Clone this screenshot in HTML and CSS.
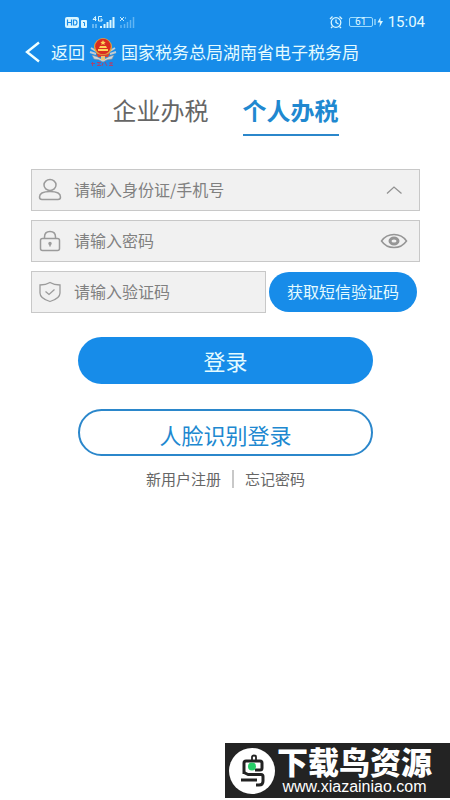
FILE: index.html
```html
<!DOCTYPE html>
<html lang="zh-CN">
<head>
<meta charset="utf-8">
<meta name="viewport" content="width=device-width, initial-scale=1">
<title>国家税务总局湖南省电子税务局</title>
<link rel="stylesheet" href="styles.css">
</head>
<body>
<header class="header">
  <div class="status">
    <div class="status-group">
      <svg width="72" height="14" viewBox="0 0 72 14" aria-hidden="true">
        <rect x="0" y="2" width="14" height="11" rx="2" fill="#d9f6ff"/>
        <path d="M2.500 4.500v6M6.500 4.500v6M2.500 7.500h4M8.500 5h1.500q2 0 2 2.500t-2 2.500H8.500z" fill="none" stroke="#178ce9" stroke-width="1.200"/>
        <rect x="16" y="5" width="6" height="8" rx="1" fill="#d9f6ff"/>
        <path d="M18 7.500h1.500V11" fill="none" stroke="#178ce9"/>
        <path d="M30.500 6V1.500L28 4.500h3.500M37 1.500h-3.500V6H37V4h-1.500" fill="none" stroke="#d9f6ff"/>
        <path d="M28 9v4M31 9v4" stroke="#7fc4f5" stroke-width="1.500"/>
        <path d="M36 11v2M39.500 9v4M42.500 7v6M45.500 5v8M48.500 2v11" stroke="#d9f6ff" stroke-width="2"/>
        <path d="M55 2l4 4M59 2l-4 4M60 3h1" stroke="#c4ebff"/>
        <path d="M56 10v3M59.500 9v4M62.500 7v6M65.500 5v8M68.500 2v11" stroke="#62b5f3" stroke-width="1.500"/>
      </svg>
    </div>
    <div class="status-group">
      <svg width="14" height="14" viewBox="0 0 14 14" fill="none" stroke="#d9f6ff" stroke-width="1.300" aria-hidden="true">
        <circle cx="7" cy="7.500" r="4.800"/><path d="M7 4.500v3l2.500 1.500M1 4l2.500-2.500M13 4l-2.500-2.500M3.500 11.500L2 13M10.500 11.500L12 13"/>
      </svg>
      <span class="battery">61</span>
      <svg class="bolt" width="9" height="12" viewBox="0 0 9 12" aria-hidden="true"><path d="M1 3v6" stroke="#d9f6ff"/><path d="M6.500 1L3.500 6.500H6L5.500 11L9 5H6.500z" fill="#d9f6ff"/></svg>
      <time class="time">15:04</time>
    </div>
  </div>
  <nav class="nav">
    <a class="back" href="#">
      <svg width="16" height="22" viewBox="0 0 16 22" fill="none" stroke="#f0ffff" stroke-width="2.400" aria-hidden="true"><path d="M14 1.500L2 11l12 9.500"/></svg>
      返回
    </a>
    <svg class="emblem" width="28" height="30" viewBox="0 0 28 30" aria-hidden="true">
      <path d="M2 11l5 3M1 15l6 2M26 11l-5 3M27 15l-6 2" stroke="#c3ccd2" stroke-width="2"/>
      <path d="M3 18q5 1 11 5q6-4 11-5l-2 4q-5 0-9 3q-4-3-9-3z" fill="#cfd5d8" stroke="#858d95" stroke-width=".6"/>
      <circle cx="14" cy="10" r="9" fill="#e3a63d"/>
      <circle cx="14" cy="9.500" r="7.800" fill="#d92c20"/>
      <path d="M14 3l.8 1.700 1.900.2-1.400 1.300.4 1.900-1.700-1-1.700 1 .4-1.900-1.400-1.300 1.900-.2zM9 12h10v2H9zM11 9h6l1 2h-8z" fill="#ffd45a"/>
      <path d="M7 16q7 4 14 0l-2 4H9z" fill="#d94132"/>
      <path d="M12 19h4v4h-4z" fill="#e9c47a"/>
      <path d="M3.500 25v4M2 26.500h4M8 25.500h4M10 25v4M8 28.500h4M14 26l-1 3M16 25l2 4M20 26h4M22 25v4M20 28.500h4" fill="none" stroke="#a84472"/>
    </svg>
    <h1 class="title">国家税务总局湖南省电子税务局</h1>
  </nav>
</header>

<main class="main">
  <div class="tabs" role="tablist">
    <button class="tab" type="button" role="tab" aria-selected="false">企业办税</button>
    <button class="tab tab-active" type="button" role="tab" aria-selected="true">个人办税</button>
  </div>

  <form class="form">
    <div class="field">
      <svg width="24" height="24" viewBox="0 0 24 24" fill="none" stroke="#9b9b9b" stroke-width="1.500" aria-hidden="true"><ellipse cx="12" cy="7" rx="6" ry="5.500"/><path d="M1.500 19c0-4 5-5.500 10.500-5.500S22.500 15 22.500 19q0 2.500-2.500 2.500H4Q1.500 21.500 1.500 19z"/></svg>
      <input class="input" type="text" aria-label="身份证/手机号" placeholder="请输入身份证/手机号">
      <button class="icon-button" type="button" aria-label="收起">
        <svg width="28" height="18" viewBox="0 0 28 18" fill="none" stroke="#929292" stroke-width="1.300"><path d="M7 12.500L14 6l7.500 6.500"/></svg>
      </button>
    </div>
    <div class="field">
      <svg width="24" height="24" viewBox="0 0 24 24" fill="none" stroke="#9b9b9b" stroke-width="1.500" aria-hidden="true"><rect x="2.500" y="9.500" width="19" height="12" rx="2"/><path d="M6.500 9.500V8c0-3.500 2-5.500 5.500-5.500s5.500 2 5.500 5.500v1.500"/><circle cx="12" cy="14.500" r="1" fill="#9b9b9b"/><path d="M12 15v2.500"/></svg>
      <input class="input" type="password" aria-label="密码" placeholder="请输入密码">
      <button class="icon-button" type="button" aria-label="显示密码">
        <svg width="28" height="18" viewBox="0 0 28 18" fill="none" stroke="#959595"><path d="M1.500 9Q6 2.500 14 2.500T26.500 9Q22 15.500 14 15.500T1.500 9z" stroke-width="1.500"/><ellipse cx="14" cy="9" rx="4" ry="3" stroke-width="3"/></svg>
      </button>
    </div>
    <div class="code-row">
      <div class="field code-field">
        <svg width="24" height="24" viewBox="0 0 24 24" fill="none" stroke="#9b9b9b" stroke-width="1.300" aria-hidden="true"><path d="M12 2.500Q8 5 2 5v8c0 4 5 7 10 8.500 5-1.500 10-4.500 10-8.500V5Q16 5 12 2.500z"/><path d="M7.500 11.500l3.500 3 5.500-5"/></svg>
        <input class="input" type="text" aria-label="验证码" placeholder="请输入验证码">
      </div>
      <button class="sms" type="button">获取短信验证码</button>
    </div>
    <div class="actions">
      <button class="action action-primary" type="submit">登录</button>
      <button class="action action-outline" type="button">人脸识别登录</button>
    </div>
    <div class="links">
      <a class="link" href="#">新用户注册</a>
      <a class="link link-divided" href="#">忘记密码</a>
    </div>
  </form>
</main>

<footer class="brand">
  <svg width="46" height="46" viewBox="0 0 46 46" aria-hidden="true">
    <circle cx="23" cy="23" r="23" fill="#fff"/>
    <g fill="none" stroke="#222" stroke-width="3" stroke-linejoin="round">
      <path d="M23 12V9q0-1.500 2-1.500t2 1.500v3" stroke-width="1.800"/>
      <path d="M15 26V15q0-2 2-2h14q2 0 2 2v5q0 2-2 2h-5"/>
      <path d="M15 24.500l4 2h13q2 0 2 2V33q0 4-4 4h-3M12 32h16"/>
    </g>
    <circle cx="23" cy="18.500" r="4" fill="#27cf68"/>
  </svg>
  <div class="brand-text">
    <strong class="brand-name">下载鸟资源</strong>
    <span class="brand-url">www.xiazainiao.com</span>
  </div>
</footer>
</body>
</html>
```
FILE: styles.css
```css
* {
  box-sizing: border-box;
}

body {
  margin: 0;
  min-height: 100vh;
  padding-bottom: 2px;
  display: flex;
  flex-direction: column;
  background: #fff;
  color: #666;
  font-family: "Noto Sans CJK SC", sans-serif;
}

button,
input {
  margin: 0;
  padding: 0;
  border: 0;
  background: none;
  font: inherit;
  color: inherit;
}

a {
  color: inherit;
  text-decoration: none;
}

svg {
  display: block;
  flex: none;
}

.header {
  padding-top: 12px;
  background: #178ce9;
  color: #e4fbff;
}

.status {
  height: 20px;
  padding: 0 25px 0 65px;
  display: flex;
  align-items: center;
  justify-content: space-between;
}

.status-group {
  display: flex;
  align-items: center;
}

.battery {
  width: 24px;
  height: 10px;
  margin-left: 6px;
  border: 1px solid #9cdcff;
  border-radius: 2px;
  font: 10px/8px Roboto, sans-serif;
  text-align: center;
}

.bolt {
  margin-left: 1px;
}

.time {
  margin-left: 5px;
  font: 15px/20px Roboto, sans-serif;
}

.nav {
  height: 40px;
  padding: 0 25px;
  display: flex;
  align-items: center;
  font-size: 17px;
  line-height: 24px;
}

.back {
  display: flex;
  align-items: center;
  gap: 10px;
}

.emblem {
  margin: 0 4px;
}

.title {
  margin: 0;
  font-size: 17px;
  font-weight: 400;
  white-space: nowrap;
}

.main {
  padding: 24px 30px 0 31px;
}

.tabs {
  display: flex;
  justify-content: center;
  gap: 34px;
}

.tab {
  height: 40px;
  padding-bottom: 10px;
  border-bottom: 2px solid transparent;
  font-size: 24px;
  line-height: 28px;
}

.tab-active {
  border-color: #2b87cb;
  color: #2088d0;
  font-weight: 700;
}

.form {
  margin-top: 33px;
  display: flex;
  flex-direction: column;
  gap: 9px;
}

.field {
  height: 42px;
  padding: 0 11px 0 6px;
  display: flex;
  align-items: center;
  border: 1px solid #c8c8c8;
  background: #f1f1f1;
}

.input {
  flex: 1;
  min-width: 0;
  height: 100%;
  padding: 0 0 2px 12px;
  font-size: 16px;
  outline: 0;
}

.input::placeholder {
  color: #808080;
  opacity: 1;
}

.code-row {
  display: flex;
  align-items: center;
  gap: 3px;
  padding-right: 3px;
}

.code-field {
  flex: 1;
  min-width: 0;
}

.sms {
  flex: none;
  height: 40px;
  padding: 0 18px 2px;
  border-radius: 20px;
  background: #178ce9;
  color: #e4fbff;
  font-size: 16px;
}

.actions {
  width: 76%;
  margin: 15px auto 0;
  display: flex;
  flex-direction: column;
  gap: 25px;
}

.action {
  height: 47px;
  border-radius: 24px;
  font-size: 22px;
}

.action-primary {
  padding-bottom: 2px;
  background: #178ce9;
  color: #e4fbff;
}

.action-outline {
  padding-top: 2px;
  border: 2px solid #2b87cb;
  color: #2088d0;
}

.links {
  margin-top: 5px;
  display: flex;
  justify-content: center;
  gap: 11px;
  font-size: 15px;
  line-height: 18px;
}

.link-divided {
  padding-left: 11px;
  border-left: 2px solid #c8c8c8;
}

.brand {
  height: 55px;
  width: 50%;
  min-width: 225px;
  margin: auto 0 0 auto;
  padding-left: 4px;
  display: flex;
  align-items: center;
  gap: 2px;
  background: #232323;
  color: #fff;
}

.brand-text {
  display: flex;
  flex-direction: column;
  align-items: center;
}

.brand-name {
  font-size: 31px;
  font-weight: 900;
  line-height: 32px;
}

.brand-url {
  font: 16px/20px "Liberation Sans", sans-serif;
}
```
